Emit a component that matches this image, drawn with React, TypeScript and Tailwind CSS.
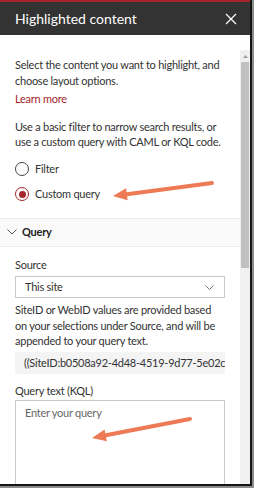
import React from "react";

const font = { fontFamily: 'Lato, "Open Sans", "Liberation Sans", sans-serif' };

function Radio({ label, checked }: { label: string; checked?: boolean }) {
  return (
    <label className="flex h-[25px] items-center gap-[6px]">
      <span
        className={
          checked
            ? "flex h-[14px] w-[14px] items-center justify-center rounded-full border border-[#a4262c]"
            : "flex h-[14px] w-[14px] items-center justify-center rounded-full border border-[#444]"
        }
      >
        {checked && <span className="h-[7px] w-[7px] rounded-full bg-[#a4262c]" />}
      </span>
      <span className="text-[#333]">{label}</span>
    </label>
  );
}

function Arrows() {
  const arrow = (x1: number, y1: number, x2: number, y2: number) => {
    const dx = x2 - x1;
    const dy = y2 - y1;
    const len = Math.hypot(dx, dy);
    const ux = dx / len;
    const uy = dy / len;
    const hx = x2 - ux * 14;
    const hy = y2 - uy * 14;
    const px = -uy * 6;
    const py = ux * 6;
    return (
      <g>
        <line x1={x1} y1={y1} x2={hx} y2={hy} stroke="#ee7a55" strokeWidth={4} strokeLinecap="round" />
        <polygon points={`${x2},${y2} ${hx + px},${hy + py} ${hx - px},${hy - py}`} fill="#ee7a55" />
      </g>
    );
  };
  return (
    <svg className="pointer-events-none absolute left-0 top-0" width={254} height={488}>
      {arrow(212, 183, 113, 196)}
      {arrow(190, 419, 92, 438)}
    </svg>
  );
}

export default function App() {
  return (
    <div className="relative h-[488px] w-[254px] overflow-hidden bg-[#8c8c8c]" style={font}>
      <div className="flex h-[486px] w-[252px] flex-col overflow-hidden border-b-2 border-r-2 border-[#151515] bg-white">
        <div className="h-[2px] bg-[#a4262c]" />
        <div className="flex h-[33px] items-center justify-between bg-[#333333] pl-[15px] pr-[13px]">
          <span className="text-[14px] text-white">Highlighted content</span>
          <svg width="12" height="12" viewBox="0 0 12 12">
            <path d="M1 1 L11 11 M11 1 L1 11" stroke="#fff" strokeWidth="1.2" />
          </svg>
        </div>

        <div className="flex min-h-0 flex-1 pt-[15px]">
          <div className="min-w-0 flex-1 text-[11px] leading-[15.5px] tracking-[-0.25px] text-[#333]">
            <div className="pl-[15px] pt-[7px]">
              <p className="whitespace-nowrap">
                Select the content you want to highlight, and
                <br />
                choose layout options.
              </p>
              <p className="mt-[3px] text-[#a4262c]">Learn more</p>
              <p className="mt-[12px] whitespace-nowrap">
                Use a basic filter to narrow search results, or
                <br />
                use a custom query with CAML or KQL code.
              </p>
              <div className="mt-[7px] flex flex-col">
                <Radio label="Filter" />
                <Radio label="Custom query" checked />
              </div>
            </div>

            <div className="mt-[11px] flex h-[29px] items-center gap-[5px] border-y border-[#ececec] bg-[#fafafa] pl-[7px]">
              <svg width="10" height="6" viewBox="0 0 10 6">
                <path d="M0.5 0.5 L5 5 L9.5 0.5" fill="none" stroke="#555" strokeWidth="1" />
              </svg>
              <span className="font-bold text-[#222]">Query</span>
            </div>

            <div className="pl-[15px] pt-[10px]">
              <div>Source</div>
              <div className="mt-[4px] flex h-[22px] w-[210px] items-center justify-between border border-[#c8c8c8] pl-[9px] pr-[10px]">
                <span>This site</span>
                <svg width="9" height="5" viewBox="0 0 9 5">
                  <path d="M0.5 0.5 L4.5 4.5 L8.5 0.5" fill="none" stroke="#777" strokeWidth="1" />
                </svg>
              </div>
              <p className="mt-[4px] whitespace-nowrap">
                SiteID or WebID values are provided based
                <br />
                on your selections under Source, and will be
                <br />
                appended to your query text.
              </p>
              <div className="mt-[3px] flex h-[22px] w-[210px] items-center overflow-hidden whitespace-nowrap bg-[#f4f4f4] pl-[9px]">
                ((SiteID:b0508a92-4d48-4519-9d77-5e02c6b1cf7a)
              </div>
              <div className="mt-[9px]">Query text (KQL)</div>
              <div className="mt-[2px] h-[90px] w-[210px] border border-[#c8c8c8] px-[9px] pt-[4px] text-[#666]">
                Enter your query
              </div>
            </div>
          </div>

          <div className="flex w-[10px] flex-col bg-[#f0f0f0]">
            <div className="flex h-[12px] items-center justify-center">
              <svg width="5" height="3" viewBox="0 0 5 3">
                <path d="M0 3 L2.5 0 L5 3 Z" fill="#a0a0a0" />
              </svg>
            </div>
            <div className="ml-[1px] h-[206px] w-[8px] bg-[#c1c1c1]" />
          </div>
        </div>
      </div>
      <Arrows />
    </div>
  );
}
